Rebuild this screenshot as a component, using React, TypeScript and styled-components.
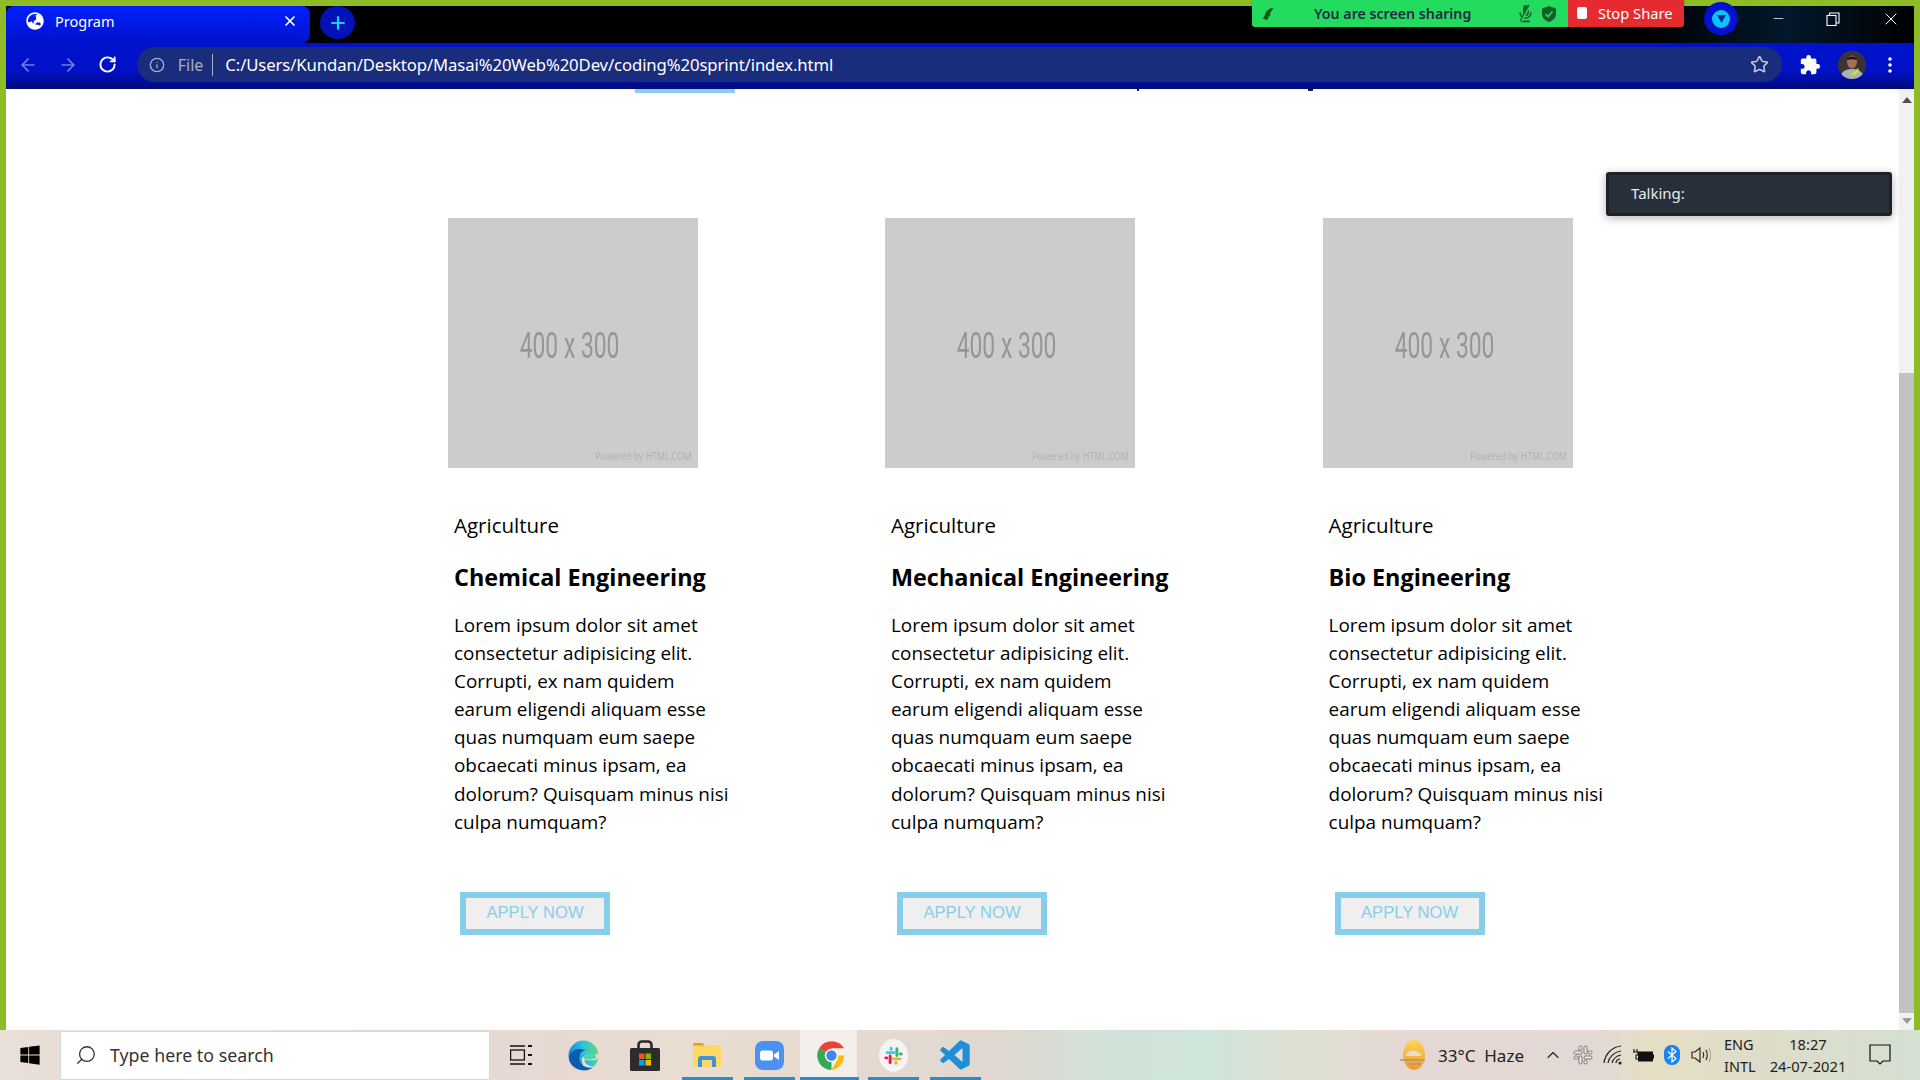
import React from "react";
import styled, { createGlobalStyle } from "styled-components";
import { ArrowLeft, ArrowRight, RotateCw, Info, Star, Search, ChevronUp, X, Minus, Plus } from "lucide-react";
import { FaWindows, FaGlobeAsia } from "react-icons/fa";

const Global = createGlobalStyle`
  html, body { margin: 0; padding: 0; height: 100%; background: #fff; overflow: hidden; }
  #root { height: 100%; }
  * { box-sizing: border-box; }
`;

const Screen = styled.div`
  width: 1920px; height: 1080px; position: relative; display: flex; flex-direction: column;
  font-family: "Noto Sans", "Open Sans", sans-serif;
`;
const Frame = styled.div`
  flex: 1; min-height: 0; display: flex; flex-direction: column;
  border-style: solid; border-color: #8fbc26; border-width: 6px 6px 0 6px;
`;
const TabStrip = styled.div`
  height: 37px; display: flex; align-items: stretch;
  background: linear-gradient(90deg, #000 0 1640px, #02182c 1780px, #000 1908px);
`;
const Tab = styled.div`
  width: 304px; display: flex; align-items: center; padding: 0 12px 7px 20px; gap: 11px;
  background: linear-gradient(180deg, #0020ff, #0012cc);
  border-radius: 8px 8px 8px 0; color: #fff; font-size: 14.5px;
`;
const TabTitle = styled.span`flex: 1;`;
const NewTab = styled.div`
  width: 35px; height: 33px; margin: 0 0 0 10px; border-radius: 50%; background: #0012b8;
  display: flex; align-items: center; justify-content: center; color: #18d0ff;
`;
const WinControls = styled.div`
  margin-left: auto; display: flex; align-items: center; color: #fff; padding: 0 0 12px;
`;
const ProfileDot = styled.div`
  width: 34px; height: 33px; border-radius: 50%; background: #0012d0; margin-right: 20px;
  display: flex; align-items: center; justify-content: center;
`;
const ProfileInner = styled.div`
  width: 18px; height: 18px; border-radius: 50%; background: #08c4ff;
  display: flex; align-items: center; justify-content: center;
`;
const WinBtn = styled.div<{ $w: number }>`
  width: ${p => p.$w}px; display: flex; align-items: center; justify-content: center;
`;
const Toolbar = styled.div`
  height: 46px; display: flex; align-items: center; padding: 0 0 3px 0;
  background: linear-gradient(180deg, #0012cc 0, #0012c8 60%, #000a78 100%);
  color: #fff;
`;
const NavBtn = styled.div<{ $dim?: boolean }>`
  width: 40px; display: flex; justify-content: center; opacity: ${p => (p.$dim ? 0.45 : 1)};
  &:first-child { margin-left: 2px; }
`;
const Omnibox = styled.div`
  width: 1649px; height: 35px; margin-left: 9px; border-radius: 18px; background: #1a2c7c;
  display: flex; align-items: center; padding: 0 13px 0 12px;
`;
const FileLabel = styled.span`
  color: #a9aec8; font-size: 16px; margin-left: 13px; padding-right: 9px; border-right: 1px solid #a9aec8; line-height: 22px;
`;
const Url = styled.span`
  color: #fff; font-size: 16.7px; margin-left: 12px; flex: 1; white-space: nowrap; letter-spacing: -0.1px;
`;
const ToolIcon = styled.div<{ $w: number }>`
  width: ${p => p.$w}px; display: flex; justify-content: center; align-items: center;
`;
const Avatar = styled.div`
  width: 28px; height: 28px; border-radius: 50%; overflow: hidden; background: #3a3236;
`;
const Main = styled.div`
  flex: 1; min-height: 0; display: flex; background: #fff;
`;
const Content = styled.div`
  flex: 1; min-width: 0; display: flex; flex-direction: column;
`;
const ScrolledOff = styled.div`
  height: 4px; display: flex; flex: none; padding-left: 629px;
`;
const CutOffButton = styled.div`width: 100px; height: 4px; background: #87ceeb;`;
const CutOffGlyph = styled.div<{ $gap: number; $w: number }>`
  width: ${p => p.$w}px; height: 2px; margin-left: ${p => p.$gap}px; background: #1a1a2a;
`;
const Cards = styled.div`
  display: grid; grid-template-columns: 437px 437.6px 437px; padding: 125px 0 0 442px;
`;
const Card = styled.article`
  display: flex; flex-direction: column; align-items: flex-start;
`;
const Placeholder = styled.div`
  width: 250px; height: 250px; background: #cccccc; position: relative; display: flex;
  align-items: center; justify-content: center; padding: 5px 6px 0 0;
  color: #969696; font-family: Roboto, sans-serif;
`;
const PhText = styled.span`
  font-size: 36px; transform: scaleX(0.635); white-space: nowrap; filter: blur(0.4px);
`;
const Powered = styled.span`
  position: absolute; right: 6px; bottom: 5px; font-size: 11px; color: #b2b2b2; white-space: nowrap;
  transform: scaleX(0.8); transform-origin: right center; filter: blur(0.3px); font-family: "Noto Sans", sans-serif;
`;
const comic = `"Open Sans", "DejaVu Sans", sans-serif`;
const Category = styled.div`
  font-family: ${comic}; font-size: 20.5px; color: #000; line-height: 28px; margin: 43px 0 0 6px;
`;
const Title = styled.h2`
  font-family: ${comic}; font-size: 23.4px; font-weight: 700; color: #000; line-height: 32px; margin: 22px 0 0 6px; white-space: nowrap;
`;
const Para = styled.p`
  font-family: ${comic}; font-size: 18.9px; color: #000; line-height: 28.1px; margin: 18px 0 0 6px;
`;
const Line = styled.span`display: block; white-space: nowrap;`;
const Apply = styled.button`
  width: 150px; height: 43px; margin: 56px 0 0 12px; padding: 0; background: #efefef; border: 6px solid #87ceeb;
  color: #87ceeb; font-family: "Liberation Sans", Arial, sans-serif; font-size: 16.6px; border-radius: 0;
`;
const Scrollbar = styled.div`
  width: 15px; margin-left: auto; background: #f1f1f1; display: flex; flex-direction: column; align-items: center;
`;
const ScrollArrow = styled.div<{ $down?: boolean }>`
  width: 0; height: 0; margin: ${p => (p.$down ? "auto 0 6px" : "8px 0 0")};
  border-left: 5px solid transparent; border-right: 5px solid transparent;
  ${p => (p.$down ? "border-top: 6px solid #9a9a9a;" : "border-bottom: 6px solid #505050;")}
`;
const Thumb = styled.div`
  width: 15px; height: 640px; background: #c1c1c1; margin-top: 270px;
`;
const ShareBar = styled.div`
  position: absolute; left: 1252px; top: 0; width: 432px; height: 27px; display: flex;
  border-radius: 0 0 3px 3px; overflow: hidden; box-shadow: 0 0 3px rgba(0,0,0,.25);
`;
const ShareGreen = styled.div`
  width: 316px; background: #23db5e; display: flex; align-items: center; padding: 0 0 0 10px; font-size: 14.2px; font-weight: 600;
`;
const ShareLabel = styled.span`margin-left: 38px; flex: 1; white-space: nowrap; color: #232c45;`;
const ShareIcons = styled.span`display: flex; gap: 9px; align-items: center; margin-right: 12px;`;
const ShareRed = styled.div`
  flex: 1; background: #e52b2f; color: #fff; display: flex; align-items: center; gap: 11px; padding-left: 9px; font-size: 14.7px; padding-bottom: 2px;
`;
const StopSquare = styled.span`width: 10px; height: 12px; background: #fff; border-radius: 2px;`;
const Talking = styled.div`
  position: absolute; left: 1606px; top: 172px; width: 286px; height: 44px; background: #27303a; border: 3px solid #1e2125;
  border-radius: 3px; color: #e8eaec; font-size: 15px; display: flex; align-items: center; padding: 0 0 2px 22px;
  box-shadow: 0 2px 10px rgba(0,0,0,.3);
`;
const Taskbar = styled.div`
  height: 50px; display: flex; align-items: center; flex: none;
  background: linear-gradient(90deg, #e8dfd8 0, #e6d8d3 500px, #e9dcd0 700px, #e0d8d0 1000px, #cfe3d9 1120px, #cfe4da 1210px, #dee0d2 1300px, #e5d8d4 1400px, #e2d8d4 1600px, #e6dfc4 1650px, #dfdcc8 1750px, #d4e0d2 1920px);
`;
const StartBtn = styled.div`
  width: 60px; display: flex; justify-content: center; color: #000;
`;
const SearchBox = styled.div`
  width: 430px; height: 49px; margin-top: 1px; background: #fff; border: 1px solid #d8d8d8; display: flex; align-items: center; padding: 0 0 2px 14px; gap: 13px;
  color: #333; font-size: 17.8px;
`;
const TaskSlot = styled.div<{ $active?: boolean; $line?: boolean }>`
  width: 62px; height: 50px; display: flex; align-items: center; justify-content: center; position: relative;
  background: ${p => (p.$active ? "linear-gradient(90deg, rgba(255,255,255,.55) 57px, transparent 57px)" : "transparent")};
  ${p => p.$line ? `&::after { content: ""; position: absolute; left: ${p.$active ? 0 : 6}px; right: ${p.$active ? 3 : 5}px; bottom: 0; height: 3px; background: #2b8ccc; }` : ""}
`;
const Tray = styled.div`
  margin-left: auto; display: flex; align-items: center; color: #111; height: 50px;
`;
const Weather = styled.span`font-size: 17px; margin-left: 12px; margin-right: 14px; white-space: pre; color: #222;`;
const TrayIcon = styled.div<{ $w?: number }>`
  width: ${p => p.$w ?? 30}px; display: flex; justify-content: center; color: #222;
`;
const LangBlock = styled.div`
  font-size: 14.5px; line-height: 22px; margin-left: 8px; width: 45px; color: #222;
`;
const ClockBlock = styled.div`
  font-size: 14.7px; line-height: 22px; text-align: center; width: 78px; color: #222;
`;
const Notif = styled.div`width: 73px; display: flex; padding-left: 22px;`;

const LOREM = [
  "Lorem ipsum dolor sit amet",
  "consectetur adipisicing elit.",
  "Corrupti, ex nam quidem",
  "earum eligendi aliquam esse",
  "quas numquam eum saepe",
  "obcaecati minus ipsam, ea",
  "dolorum? Quisquam minus nisi",
  "culpa numquam?",
];
const COURSES = ["Chemical Engineering", "Mechanical Engineering", "Bio Engineering"];

const EdgeIcon = () => (
  <svg width="31" height="31" viewBox="0 0 32 32">
    <defs>
      <linearGradient id="eg" x1="0" y1="0.6" x2="1" y2="0.3"><stop offset="0" stopColor="#1184d2" /><stop offset="0.55" stopColor="#2cc0dc" /><stop offset="1" stopColor="#62dd6e" /></linearGradient>
    </defs>
    <circle cx="16" cy="16" r="15.5" fill="url(#eg)" />
    <path d="M32 17c-1 3-4 4-8 4h-7c0 3 3 5 7 6 3 1 6 0 8-1v6H18l-3-7-1-6 4-4 7-1 7 1Z" fill="#e8dcd4" />
    <path d="M1 19C2 10 12 7 18 11c-5 0-7 5-6 10 1 5 7 9 14 7-3 2-7 4-11 3-7-1-13-5-14-12Z" fill="#0c5cae" />
    <path d="M12 16c2-4 9-6 14-3 2 1 3 3 3 5-1 1-3 2-5 2h-7c-1-2-1-3 0-4 1-2 3-3 3-3-3 0-6 1-8 3Z" fill="#46cfa8" opacity="0.9" />
  </svg>
);
const StoreIcon = () => (
  <svg width="30" height="31" viewBox="0 0 30 31">
    <path d="M8.5 9V5a3.5 3.5 0 0 1 3.5-3.5h6A3.5 3.5 0 0 1 21.5 5v4" fill="none" stroke="#2a2a2a" strokeWidth="2.6" />
    <rect x="0" y="8" width="30" height="23" rx="1.5" fill="#2c2c2c" />
    <rect x="9" y="13.5" width="5.5" height="5.5" fill="#f25022" />
    <rect x="15.5" y="13.5" width="5.5" height="5.5" fill="#7fba00" />
    <rect x="9" y="20" width="5.5" height="5.5" fill="#00a4ef" />
    <rect x="15.5" y="20" width="5.5" height="5.5" fill="#ffb900" />
  </svg>
);
const FolderIcon = () => (
  <svg width="28" height="24" viewBox="0 0 28 24">
    <path d="M0 1.5A1.5 1.5 0 0 1 1.5 0h8l3 3H0Z" fill="#e0a020" />
    <rect x="0" y="2.5" width="28" height="21.5" rx="1" fill="#fcd867" />
    <path d="M5 24v-8a3 3 0 0 1 3-3h12a3 3 0 0 1 3 3v8h-4v-7H9v7Z" fill="#3f93d6" />
  </svg>
);
const ZoomIcon = () => (
  <svg width="29" height="29" viewBox="0 0 29 29">
    <rect x="0" y="0" width="29" height="29" rx="8" fill="#4b90f5" />
    <rect x="5" y="9.5" width="13" height="10" rx="2.5" fill="#fff" />
    <path d="M19 13.5l5-3.5v9l-5-3.5Z" fill="#fff" />
  </svg>
);
const ChromeIcon = () => (
  <svg width="29" height="29" viewBox="0 0 30 30">
    <path d="M15 15L2.2 7.5A15 15 0 0 1 28 7.5H15Z" fill="#ea4335" />
    <path d="M15 15L2.2 7.5A15 15 0 0 0 15 30Z" fill="#34a853" />
    <path d="M15 15H28A15 15 0 0 1 15 30L21.5 19Z" fill="#fbbc05" />
    <circle cx="15" cy="15" r="7" fill="#fff" />
    <circle cx="15" cy="15" r="5.4" fill="#4285f4" />
  </svg>
);
const SlackIcon = () => (
  <svg width="29" height="33" viewBox="0 0 30 34">
    <ellipse cx="15" cy="17" rx="15" ry="17" fill="#f6f4f2" />
    <rect x="7" y="12.5" width="10" height="3" rx="1.5" fill="#36c5f0" />
    <rect x="11" y="8" width="3" height="4" rx="1.5" fill="#36c5f0" />
    <rect x="17" y="8.5" width="3" height="10" rx="1.5" fill="#2eb67d" />
    <rect x="20.5" y="14" width="4" height="3" rx="1.5" fill="#2eb67d" />
    <rect x="13" y="19" width="10" height="3" rx="1.5" fill="#ecb22e" />
    <rect x="16" y="22.5" width="3" height="4" rx="1.5" fill="#ecb22e" />
    <rect x="10" y="16" width="3" height="10" rx="1.5" fill="#e01e5a" />
    <rect x="5.5" y="18" width="4" height="3" rx="1.5" fill="#e01e5a" />
  </svg>
);
const SlackMono = () => (
  <svg width="20" height="20" viewBox="0 0 20 20" fill="#f2eeea" stroke="#707070" strokeWidth="1">
    <rect x="1" y="6" width="8" height="3" rx="1.5" />
    <rect x="6" y="1" width="3" height="4" rx="1.5" />
    <rect x="11" y="1" width="3" height="8" rx="1.5" />
    <rect x="15" y="6" width="4" height="3" rx="1.5" />
    <rect x="11" y="11" width="8" height="3" rx="1.5" />
    <rect x="11" y="15" width="3" height="4" rx="1.5" />
    <rect x="6" y="11" width="3" height="8" rx="1.5" />
    <rect x="1" y="11" width="4" height="3" rx="1.5" />
  </svg>
);
const CodeIcon = () => (
  <svg width="30" height="32" viewBox="0 0 100 100">
    <path d="M71 2 96 14c2 1 3 3 3 5v62c0 2-1 4-3 5L71 98c-2 1-4 1-6-1L30 63 13 76c-2 1-4 1-5 0l-6-6c-2-2-2-4 0-6l15-14L2 36c-2-2-2-4 0-6l6-6c1-1 3-1 5 0l17 13L65 3c2-2 4-2 6-1Z" fill="#1e8fd8" />
    <path d="M75 27 48 50l27 23Z" fill="#e8dcd8" />
  </svg>
);
const SunIcon = () => (
  <svg width="26" height="30" viewBox="0 0 26 30">
    <defs><linearGradient id="sun" x1="0" y1="0" x2="0" y2="1"><stop offset="0" stopColor="#fbd35c" /><stop offset="1" stopColor="#f59a22" /></linearGradient></defs>
    <ellipse cx="14" cy="15" rx="11" ry="15" fill="url(#sun)" />
    <path d="M8 13c1-3 9-3 11 0h2v3H6v-3Z" fill="#e8dcc8" />
    <path d="M0 20h25M9 24h12" stroke="#a89880" strokeWidth="1.6" />
  </svg>
);
const PersonImg = () => (
  <svg width="28" height="28" viewBox="0 0 28 28">
    <rect width="28" height="28" fill="#3a3236" />
    <path d="M2 28c1-8 6-10 12-10s11 2 12 10Z" fill="#aab0b8" />
    <path d="M10 19l4 4 6-6 1 3-6 5Z" fill="#c8e830" />
    <ellipse cx="14" cy="11" rx="5" ry="6.5" fill="#a86e50" />
    <path d="M9 9c0-4 9-5 10 0-3-1-7-1-10 0Z" fill="#1a1414" />
  </svg>
);
const CopyWin = () => (
  <svg width="14" height="14" viewBox="0 0 14 14" fill="none" stroke="#fff" strokeWidth="1.1">
    <rect x="1" y="3.5" width="9" height="10" />
    <path d="M3.5 3.5V1h9.5v10h-3" />
  </svg>
);
const Extension = () => (
  <svg width="22" height="22" viewBox="0 0 24 24" fill="#fff">
    <path d="M20.5 11H19V7c0-1.1-.9-2-2-2h-4V3.5a2.5 2.5 0 0 0-5 0V5H4c-1.1 0-1.99.9-1.99 2v3.8H3.5c1.49 0 2.7 1.21 2.7 2.7s-1.21 2.7-2.7 2.7H2V20c0 1.1.9 2 2 2h3.8v-1.5c0-1.49 1.21-2.7 2.7-2.7 1.49 0 2.7 1.21 2.7 2.7V22H17c1.1 0 2-.9 2-2v-4h1.5a2.5 2.5 0 0 0 0-5z" />
  </svg>
);
const WifiFan = () => (
  <svg width="20" height="20" viewBox="0 0 20 20" fill="none" stroke="#222" strokeWidth="1.2">
    <path d="M1 18C2 9 9 2 18 1" />
    <path d="M5 18c1-6 6-11 13-12" />
    <path d="M9 18c1-4 4-7 9-8" />
    <path d="M13 18c0-2 2-4 4-4" />
    <circle cx="17" cy="18" r="1.6" fill="#222" stroke="none" />
  </svg>
);
const BatteryPlug = () => (
  <svg width="21" height="13" viewBox="0 0 21 13">
    <rect x="5.5" y="3" width="14" height="9" fill="#111" stroke="#111" />
    <rect x="20" y="5.5" width="1" height="4" fill="#111" />
    <path d="M1 0v3M4 0v3M0 3h5v3H3v4H5" stroke="#111" strokeWidth="1.1" fill="none" />
  </svg>
);
const Bluetooth = () => (
  <svg width="16" height="20" viewBox="0 0 16 20"><rect width="16" height="20" rx="7.5" fill="#1a84f0" /><path d="M4 6.5l8 7-4 3.5V3l4 3.5-8 7" fill="none" stroke="#fff" strokeWidth="1.2" /></svg>
);
const Speaker = () => (
  <svg width="20" height="18" viewBox="0 0 20 18" fill="none" stroke="#222" strokeWidth="1.1">
    <path d="M1 6h3l5-4v14l-5-4H1Z" />
    <path d="M12 6c1 2 1 4 0 6" />
    <path d="M15 4c1.5 3 1.5 7 0 10" />
    <path d="M18 2c2 4 2 10 0 14" stroke="#a8a090" />
  </svg>
);
const NotifIcon = () => (
  <svg width="22" height="22" viewBox="0 0 22 22" fill="none" stroke="#111" strokeWidth="1.2">
    <path d="M1 1h20v16h-7l-3 3-3-3H1Z" />
  </svg>
);
const ZoomLeaf = () => (
  <svg width="14" height="16" viewBox="0 0 16 16"><path d="M13 1C8 1 4 5 3 10l-2 3 5 2c1-3 2-5 4-6l-1-1c1-2 2-4 4-7Z" fill="#0f5a1a" /></svg>
);
const MutedMic = () => (
  <svg width="15" height="19" viewBox="0 0 15 19" fill="#155f2c">
    <rect x="5" y="1" width="6" height="11" rx="3" />
    <path d="M2 8c0 4 2 6 5.5 6S13 12 13 8" fill="none" stroke="#155f2c" strokeWidth="1.3" />
    <rect x="3" y="16.5" width="9" height="1.8" />
    <path d="M3 17L12 1" stroke="#23db5e" strokeWidth="2.6" />
    <path d="M2 17L11 1" stroke="#155f2c" strokeWidth="1.4" />
  </svg>
);
const ShieldCheck = () => (
  <svg width="14" height="16" viewBox="0 0 14 16">
    <path d="M7 0l7 2.5V8c0 4-3 6.5-7 8-4-1.5-7-4-7-8V2.5Z" fill="#155f2c" />
    <path d="M3.5 8l2.5 2.5 4.5-5" fill="none" stroke="#23db5e" strokeWidth="1.6" />
  </svg>
);

export default function App() {
  return (
    <Screen>
      <Global />
      <Frame>
        <TabStrip>
          <Tab>
            <FaGlobeAsia size={18} />
            <TabTitle>Program</TabTitle>
            <X size={16} strokeWidth={2.6} />
          </Tab>
          <NewTab><Plus size={20} strokeWidth={2.6} /></NewTab>
          <WinControls>
            <ProfileDot>
              <ProfileInner>
                <svg width="9" height="8" viewBox="0 0 9 8"><path d="M0 0h9L4.5 8Z" fill="#0a2a8c" /></svg>
              </ProfileInner>
            </ProfileDot>
            <WinBtn $w={40}><Minus size={15} strokeWidth={1.2} /></WinBtn>
            <WinBtn $w={70}><CopyWin /></WinBtn>
            <WinBtn $w={46}><X size={20} strokeWidth={1.2} /></WinBtn>
          </WinControls>
        </TabStrip>
        <Toolbar>
          <NavBtn $dim><ArrowLeft size={20} /></NavBtn>
          <NavBtn $dim><ArrowRight size={20} /></NavBtn>
          <NavBtn><RotateCw size={19} strokeWidth={2.4} /></NavBtn>
          <Omnibox>
            <Info size={16} color="#a9aec8" />
            <FileLabel>File</FileLabel>
            <Url>C:/Users/Kundan/Desktop/Masai%20Web%20Dev/coding%20sprint/index.html</Url>
            <Star size={19} color="#c4c8dc" />
          </Omnibox>
          <ToolIcon $w={56}><Extension /></ToolIcon>
          <ToolIcon $w={28}><Avatar><PersonImg /></Avatar></ToolIcon>
          <ToolIcon $w={48}>
            <svg width="4" height="16" viewBox="0 0 4 16"><circle cx="2" cy="2" r="1.8" fill="#fff" /><circle cx="2" cy="8" r="1.8" fill="#fff" /><circle cx="2" cy="14" r="1.8" fill="#fff" /></svg>
          </ToolIcon>
        </Toolbar>
        <Main>
          <Content>
            <ScrolledOff>
              <CutOffButton />
              <CutOffGlyph $gap={402} $w={2} />
              <CutOffGlyph $gap={169} $w={5} />
            </ScrolledOff>
            <Cards>
              {COURSES.map(name => (
                <Card key={name}>
                  <Placeholder>
                    <PhText>400 x 300</PhText>
                    <Powered>Powered by HTML.COM</Powered>
                  </Placeholder>
                  <Category>Agriculture</Category>
                  <Title>{name}</Title>
                  <Para>{LOREM.map(l => <Line key={l}>{l}</Line>)}</Para>
                  <Apply>APPLY NOW</Apply>
                </Card>
              ))}
            </Cards>
          </Content>
          <Scrollbar>
            <ScrollArrow />
            <Thumb />
            <ScrollArrow $down />
          </Scrollbar>
        </Main>
      </Frame>
      <Taskbar>
        <StartBtn><FaWindows size={22} /></StartBtn>
        <SearchBox><Search size={22} strokeWidth={1.4} style={{ transform: "scaleX(-1)" }} />Type here to search</SearchBox>
        <TaskSlot>
          <svg width="22" height="20" viewBox="0 0 22 20" fill="none" stroke="#111" strokeWidth="1.3"><path d="M0 1h15M0 19h15" /><rect x="0.6" y="5" width="13.8" height="10" /><path d="M18 1h4M18 10h4M18 19h4" strokeWidth="2" /></svg>
        </TaskSlot>
        <TaskSlot><EdgeIcon /></TaskSlot>
        <TaskSlot><StoreIcon /></TaskSlot>
        <TaskSlot $line><FolderIcon /></TaskSlot>
        <TaskSlot $line><ZoomIcon /></TaskSlot>
        <TaskSlot $line $active><ChromeIcon /></TaskSlot>
        <TaskSlot $line><SlackIcon /></TaskSlot>
        <TaskSlot $line><CodeIcon /></TaskSlot>
        <Tray>
          <SunIcon />
          <Weather>33°C  Haze</Weather>
          <TrayIcon $w={29}><ChevronUp size={20} strokeWidth={1.4} /></TrayIcon>
          <TrayIcon $w={31}><SlackMono /></TrayIcon>
          <TrayIcon $w={30}><WifiFan /></TrayIcon>
          <TrayIcon $w={30}><BatteryPlug /></TrayIcon>
          <TrayIcon $w={28}><Bluetooth /></TrayIcon>
          <TrayIcon $w={30}><Speaker /></TrayIcon>
          <LangBlock>ENG<br />INTL</LangBlock>
          <ClockBlock>18:27<br />24-07-2021</ClockBlock>
          <Notif><NotifIcon /></Notif>
        </Tray>
      </Taskbar>
      <ShareBar>
        <ShareGreen>
          <ZoomLeaf />
          <ShareLabel>You are screen sharing</ShareLabel>
          <ShareIcons><MutedMic /><ShieldCheck /></ShareIcons>
        </ShareGreen>
        <ShareRed><StopSquare />Stop Share</ShareRed>
      </ShareBar>
      <Talking>Talking:</Talking>
    </Screen>
  );
}
